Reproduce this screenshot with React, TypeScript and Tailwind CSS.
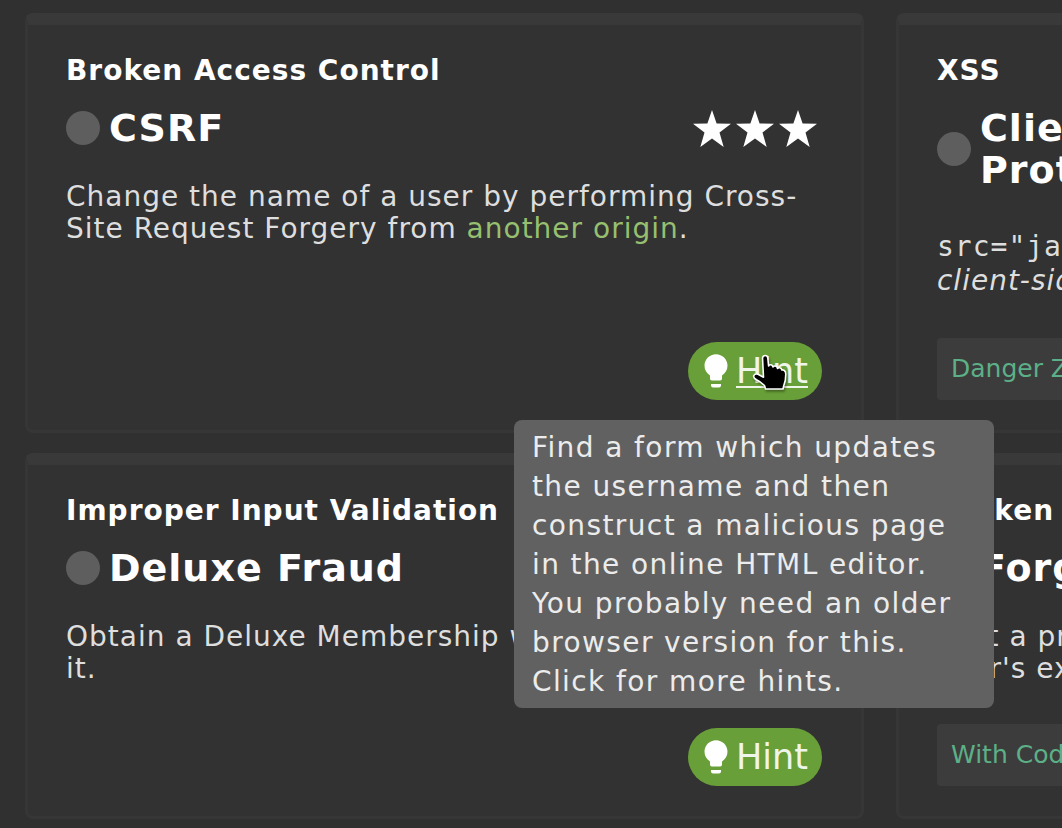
import type { ReactNode } from "react";

type Challenge = {
  category: string;
  title: string;
  difficulty: number;
  description: ReactNode;
  tag?: string;
  hint?: string;
  active?: boolean;
};

const challenges: Challenge[] = [
  {
    category: "Broken Access Control",
    title: "CSRF",
    difficulty: 3,
    description: (
      <p>
        Change the name of a user by performing Cross-Site Request Forgery from{" "}
        <a href="#origin" className="text-[#97bf70]">another origin</a>.
      </p>
    ),
    hint: "Find a form which updates the username and then construct a malicious page in the online HTML editor. You probably need an older browser version for this. Click for more hints.",
    active: true,
  },
  {
    category: "XSS",
    title: "Client-side XSS Protection",
    difficulty: 3,
    description: (
      <p className="pt-[7px] leading-[34px]">
        <code className="font-['DejaVu_Sans_Mono',monospace]">src="javascript:alert(`xss`)"&gt;</code> bypassing a{" "}
        <br />
        <em>client-side</em> security mechanism.
      </p>
    ),
    tag: "Danger Zone",
  },
  {
    category: "Improper Input Validation",
    title: "Deluxe Fraud",
    difficulty: 3,
    description: <p>Obtain a Deluxe Membership without paying for it.</p>,
    hint: "Look closely at what happens when you attempt to upgrade your account.",
  },
  {
    category: "Broken Access Control",
    title: "Forged Review",
    difficulty: 3,
    description: <p>Post a product review as another user or edit any user's existing review.</p>,
    tag: "With Coding Challenge",
  },
];

function Star() {
  return (
    <svg viewBox="0 0 38 37" className="h-[37px] w-[38px]" fill="currentColor" aria-hidden="true">
      <path d="M19 0 L23.6 13.4 L38 13.8 L26.5 22.4 L30.7 37 L19 28.4 L7.3 37 L11.5 22.4 L0 13.8 L14.4 13.4 Z" />
    </svg>
  );
}

function Bulb() {
  return (
    <svg viewBox="0 0 24 34" className="h-[34px] w-6 shrink-0" fill="#fff" aria-hidden="true">
      <path d="M12 0.3 C5.6 0.3 0.5 5.4 0.5 11.7 C0.5 15.8 2.6 19.2 6 21.4 V24.7 Q6 26.5 7.8 26.5 H16.2 Q18 26.5 18 24.7 V21.4 C21.4 19.2 23.5 15.8 23.5 11.7 C23.5 5.4 18.4 0.3 12 0.3 Z" />
      <path d="M7 30 H17 V31.5 Q17 33.5 15 33.5 H9 Q7 33.5 7 31.5 Z" />
    </svg>
  );
}

function Pointer() {
  return (
    <svg
      viewBox="0 0 36 38"
      className="pointer-events-none absolute left-[64px] top-3 h-[38px] w-9 drop-shadow-[1px_2px_1px_rgba(0,0,0,0.35)]"
      aria-hidden="true"
    >
      <path
        d="M10.5 3.8 Q11 1.5 13.2 1.5 Q15.5 1.5 15.8 3.8 L16.6 12 Q17 10.6 18.8 10.8 Q20.6 11 20.9 13 Q21.6 11.8 23.2 12 Q25.2 12.2 25.5 14.5 Q26.2 13.6 27.6 13.8 Q29.4 14 29.9 16 Q30.8 15.6 32 16.2 Q33.8 17.2 33.8 20 C33.8 25 33.6 27.5 31.8 31.5 L31 35 H13.5 L12.5 31.5 Q8 27.5 4.5 25.8 Q1 23.8 1.8 21.6 Q2.8 19.4 6 20.3 L11.5 23.2 Z"
        fill="#000"
        stroke="#fff"
        strokeWidth="1.6"
        strokeLinejoin="round"
      />
    </svg>
  );
}

function HintButton({ hint, active }: { hint: string; active?: boolean }) {
  return (
    <div className="relative ml-auto">
      <button
        type="button"
        title={active ? undefined : hint}
        aria-describedby={active ? "hint-tooltip" : undefined}
        className="flex h-[58px] items-center gap-2 rounded-full bg-[#689f38] pl-4 pr-[14px] text-[35px] leading-[58px] tracking-normal text-[#f0f5eb]"
      >
        <Bulb />
        <span className={active ? "underline decoration-2 underline-offset-3" : ""}>Hint</span>
      </button>
      {active && (
        <>
          <Pointer />
          <div
            id="hint-tooltip"
            role="tooltip"
            className="absolute -right-[172px] top-[78px] z-10 w-[480px] rounded-lg bg-[#616161] px-[18px] pb-[7px] pt-2 text-[28px] leading-[39px] tracking-wider text-[#ececec]"
          >
            {hint}
          </div>
        </>
      )}
    </div>
  );
}

function ChallengeCard({ category, title, difficulty, description, tag, hint, active }: Challenge) {
  return (
    <article className="flex flex-col rounded-lg border-[3px] border-t-[12px] border-[#363636] border-t-[#393939] bg-[#323232] pb-[30px] pl-[38px] pr-[39px] pt-[30px] tracking-[1px]">
      <div className="text-[28px] font-bold leading-8 text-white">{category}</div>
      <div className="mt-5 flex items-center justify-between">
        <div className="flex items-center gap-[9px]">
          <span className="size-[34px] shrink-0 rounded-full bg-[#5e5e5e]" />
          <h2 className="max-w-[400px] text-[38px] font-bold leading-[42px] text-white">{title}</h2>
        </div>
        <div className="mr-[5px] flex gap-[5px] text-white" role="img" aria-label={`Difficulty ${difficulty}`}>
          {Array.from({ length: difficulty }, (_, i) => (
            <Star key={i} />
          ))}
        </div>
      </div>
      <div className="mb-6 mt-8 text-[28px] leading-8 text-[#dedede]">{description}</div>
      <div className="mt-auto flex items-center">
        {tag && (
          <span className="flex h-[62px] items-center rounded bg-[#3c3c3c] px-[14px] text-[25px] tracking-normal text-[#5cb088]">
            {tag}
          </span>
        )}
        {hint && <HintButton hint={hint} active={active} />}
      </div>
    </article>
  );
}

export default function App() {
  return (
    <main className="min-h-screen overflow-hidden bg-[#303030] pb-2 pl-[25px] pt-[13px] font-['DejaVu_Sans',sans-serif]">
      <div className="grid grid-cols-[79vw_79vw] grid-rows-[minmax(420px,auto)_minmax(366px,auto)] gap-x-8 gap-y-5">
        {challenges.map((c) => (
          <ChallengeCard key={c.title} {...c} />
        ))}
      </div>
    </main>
  );
}
